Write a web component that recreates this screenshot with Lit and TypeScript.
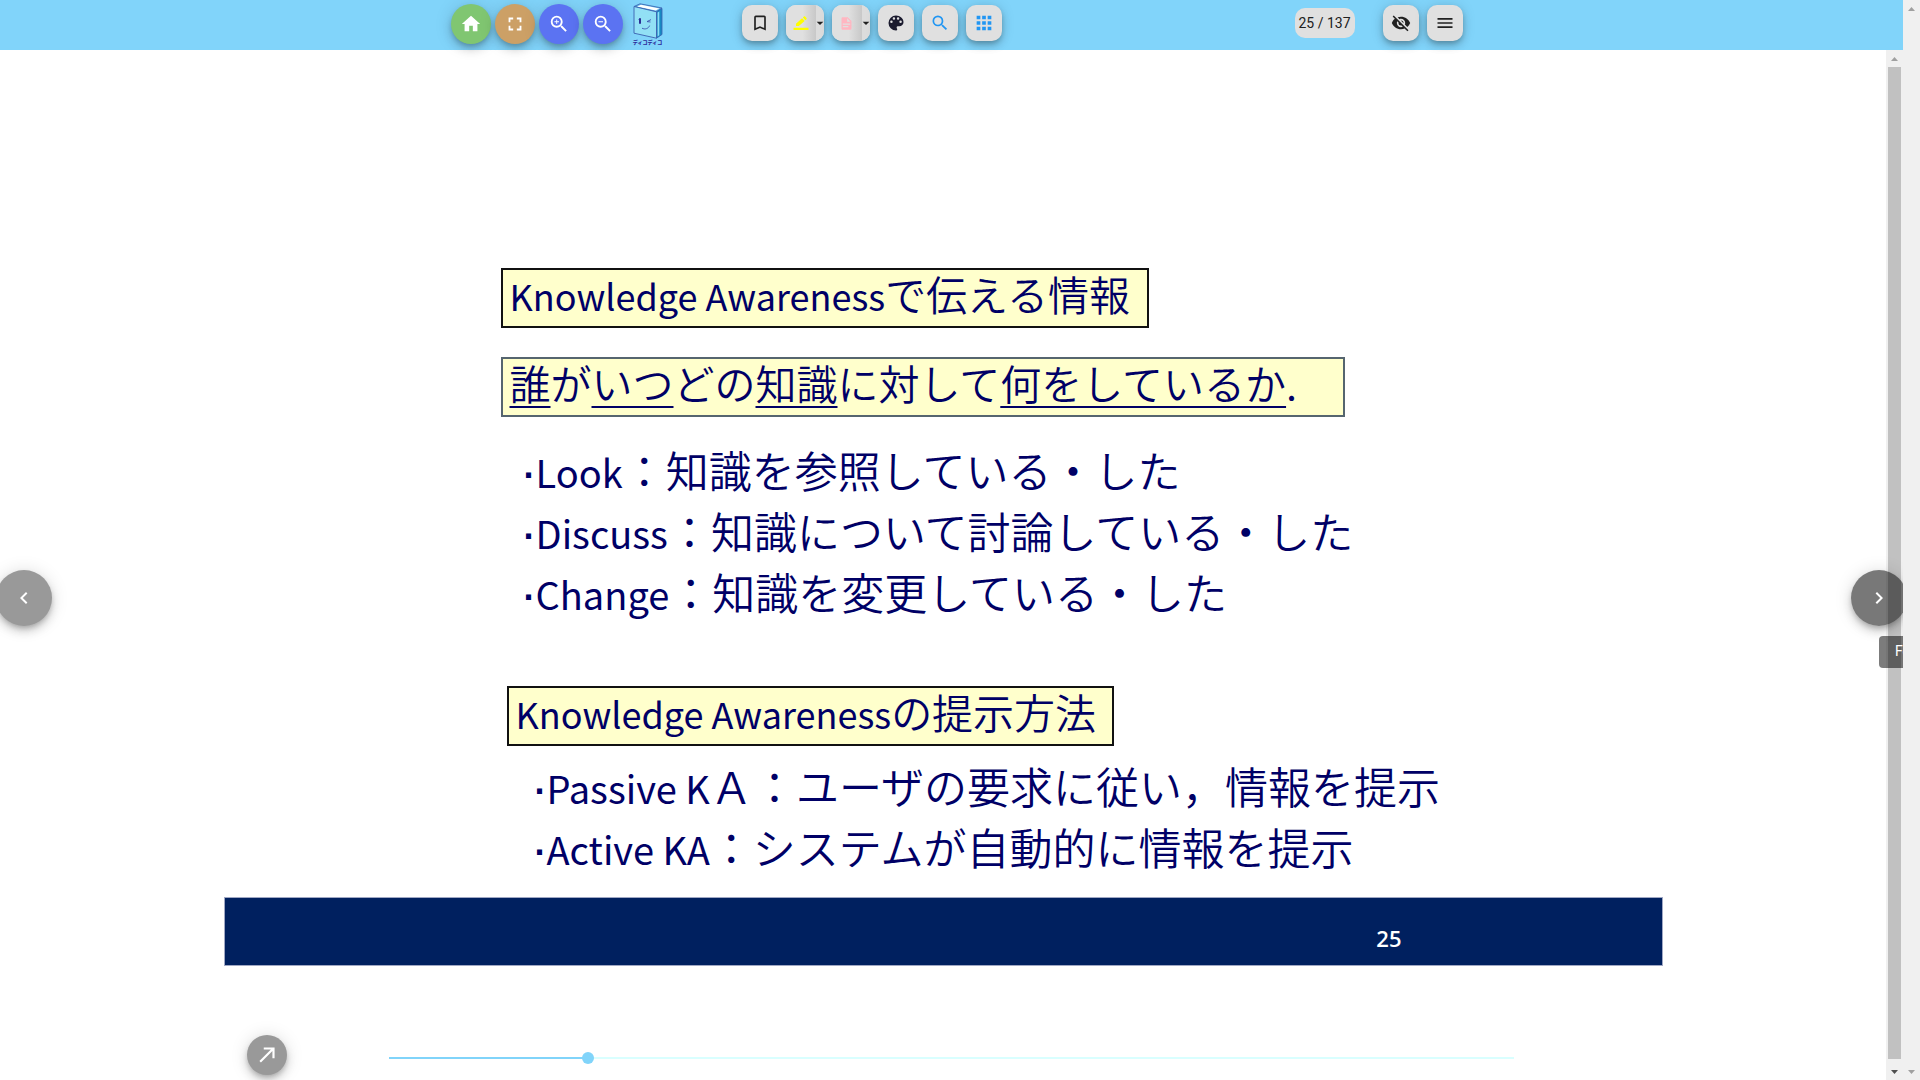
import { LitElement, html, css, svg } from "lit";
import { customElement, property, state } from "lit/decorators.js";

const ICONS: Record<string, string> = {
  home: "M10,20V14H14V20H19V12H22L12,3L2,12H5V20H10Z",
  fullscreen: "M5,5H10V7H7V10H5V5M14,5H19V10H17V7H14V5M17,14H19V19H14V17H17V14M10,17V19H5V14H7V17H10Z",
  zoomIn:
    "M15.5,14L20.5,19L19,20.5L14,15.5V14.71L13.73,14.43C12.59,15.41 11.11,16 9.5,16A6.5,6.5 0 0,1 3,9.5A6.5,6.5 0 0,1 9.5,3A6.5,6.5 0 0,1 16,9.5C16,11.11 15.41,12.59 14.43,13.73L14.71,14H15.5M9.5,14C12,14 14,12 14,9.5C14,7 12,5 9.5,5C7,5 5,7 5,9.5C5,12 7,14 9.5,14M12,10H10V12H9V10H7V9H9V7H10V9H12V10Z",
  zoomOut:
    "M15.5,14L20.5,19L19,20.5L14,15.5V14.71L13.73,14.43C12.59,15.41 11.11,16 9.5,16A6.5,6.5 0 0,1 3,9.5A6.5,6.5 0 0,1 9.5,3A6.5,6.5 0 0,1 16,9.5C16,11.11 15.41,12.59 14.43,13.73L14.71,14H15.5M9.5,14C12,14 14,12 14,9.5C14,7 12,5 9.5,5C7,5 5,7 5,9.5C5,12 7,14 9.5,14M7,9H12V10H7V9Z",
  bookmark: "M17,18L12,15.82L7,18V5H17M17,3H7A2,2 0 0,0 5,5V21L12,18L19,21V5C19,3.89 18.1,3 17,3Z",
  marker:
    "M18.6,7.4C19,7 19,6.4 18.6,6L16.9,4.1C16.5,3.7 15.9,3.7 15.5,4.1L14.2,5.4L17.3,8.7M16.4,9.6L13.3,6.3L6,12.8V15.6H9.4L16.4,9.6M3,17.8H21V20.4H3V17.8Z",
  note: "M13,9H18.5L13,3.5V9M6,2H14L20,8V20A2,2 0 0,1 18,22H6C4.89,22 4,21.1 4,20V4C4,2.89 4.89,2 6,2M15,18V16H6V18H15M18,14V12H6V14H18Z",
  palette:
    "M17.5,12A1.5,1.5 0 0,1 16,10.5A1.5,1.5 0 0,1 17.5,9A1.5,1.5 0 0,1 19,10.5A1.5,1.5 0 0,1 17.5,12M14.5,8A1.5,1.5 0 0,1 13,6.5A1.5,1.5 0 0,1 14.5,5A1.5,1.5 0 0,1 16,6.5A1.5,1.5 0 0,1 14.5,8M9.5,8A1.5,1.5 0 0,1 8,6.5A1.5,1.5 0 0,1 9.5,5A1.5,1.5 0 0,1 11,6.5A1.5,1.5 0 0,1 9.5,8M6.5,12A1.5,1.5 0 0,1 5,10.5A1.5,1.5 0 0,1 6.5,9A1.5,1.5 0 0,1 8,10.5A1.5,1.5 0 0,1 6.5,12M12,3A9,9 0 0,0 3,12A9,9 0 0,0 12,21A1.5,1.5 0 0,0 13.5,19.5C13.5,19.11 13.35,18.76 13.11,18.5C12.88,18.23 12.73,17.88 12.73,17.5A1.5,1.5 0 0,1 14.23,16H16A5,5 0 0,0 21,11C21,6.58 16.97,3 12,3Z",
  search:
    "M9.5,3A6.5,6.5 0 0,1 16,9.5C16,11.11 15.41,12.59 14.44,13.73L14.71,14H15.5L20.5,19L19,20.5L14,15.5V14.71L13.73,14.44C12.59,15.41 11.11,16 9.5,16A6.5,6.5 0 0,1 3,9.5A6.5,6.5 0 0,1 9.5,3M9.5,5C7,5 5,7 5,9.5C5,12 7,14 9.5,14C12,14 14,12 14,9.5C14,7 12,5 9.5,5Z",
  grid: "M16,20H20V16H16M16,14H20V10H16M10,8H14V4H10M16,8H20V4H16M10,14H14V10H10M4,14H8V10H4M4,20H8V16H4M10,20H14V16H10M4,8H8V4H4V8Z",
  eyeOff:
    "M11.83,9L15,12.16C15,12.11 15,12.05 15,12A3,3 0 0,0 12,9C11.94,9 11.89,9 11.83,9M7.53,9.8L9.08,11.35C9.03,11.56 9,11.77 9,12A3,3 0 0,0 12,15C12.22,15 12.44,14.97 12.65,14.92L14.2,16.47C13.53,16.8 12.79,17 12,17A5,5 0 0,1 7,12C7,11.21 7.2,10.47 7.53,9.8M2,4.27L4.28,6.55L4.73,7C3.08,8.3 1.78,10 1,12C2.73,16.39 7,19.5 12,19.5C13.55,19.5 15.03,19.2 16.38,18.66L16.81,19.08L19.73,22L21,20.73L3.27,3M12,7A5,5 0 0,1 17,12C17,12.64 16.87,13.26 16.64,13.82L19.57,16.75C21.07,15.5 22.27,13.86 23,12C21.27,7.61 17,4.5 12,4.5C10.6,4.5 9.26,4.75 8,5.2L10.17,7.35C10.74,7.13 11.35,7 12,7Z",
  menu: "M3,6H21V8H3V6M3,11H21V13H3V11M3,16H21V18H3V16Z",
  caret: "M7,10L12,15L17,10H7Z",
  arrow: "M5,17.59L15.59,7H9V5H19V15H17V8.41L6.41,19L5,17.59Z",
  left: "M15.41,16.58L10.83,12L15.41,7.41L14,6L8,12L14,18L15.41,16.58Z",
  right: "M8.59,16.58L13.17,12L8.59,7.41L10,6L16,12L10,18L8.59,16.58Z",
};

@customElement("mdi-icon")
class MdiIcon extends LitElement {
  @property() name = "";
  @property({ type: Number }) size = 20;

  static styles = css`
    :host { display: inline-flex; }
    svg { display: block; fill: currentColor; }
  `;

  render() {
    return html`<svg width=${this.size} height=${this.size} viewBox="0 0 24 24" aria-hidden="true">
      <path d=${ICONS[this.name]}></path>
    </svg>`;
  }
}

@customElement("scroll-track")
class ScrollTrack extends LitElement {
  @property({ type: Boolean }) thumb = false;

  static styles = css`
    :host { display: flex; flex-direction: column; width: 17px; background: #f0f0f0; flex: none; }
    .arrow { height: 17px; display: flex; align-items: center; justify-content: center; color: #a0a0a0; }
    .arrow.active { color: #505050; }
    .arrow svg { display: block; fill: currentColor; }
    .lane { flex: 1; display: flex; padding: 0 2px; }
    .thumb { flex: 1; background: #c1c1c1; margin-bottom: 4px; }
  `;

  render() {
    return html`
      <div class="arrow"><svg width="7" height="4" viewBox="0 0 7 4">${svg`<path d="M0 4L3.5 0L7 4Z"></path>`}</svg></div>
      <div class="lane">${this.thumb ? html`<div class="thumb"></div>` : ""}</div>
      <div class="arrow ${this.thumb ? "active" : ""}"><svg width="7" height="4" viewBox="0 0 7 4">${svg`<path d="M0 0L3.5 4L7 0Z"></path>`}</svg></div>
    `;
  }
}

@customElement("book-logo")
class BookLogo extends LitElement {
  static styles = css`
    :host { display: flex; flex-direction: column; align-items: center; width: 32px; }
    svg { display: block; }
    .name { font: 900 5px/6px "Noto Sans CJK JP", sans-serif; color: #2c2a98; white-space: nowrap; }
  `;

  render() {
    return html`
      <svg width="32" height="36" viewBox="0 0 32 36" aria-hidden="true">
        <path d="M2 3.5L8 .8L30 5L24.5 8.8Z" fill="#5fb6e6" stroke="#3a60b0" stroke-width=".8"></path>
        <path d="M5 3.4L9 1.8L27.5 5.4L23.5 7.6Z" fill="#fff"></path>
        <path d="M24.5 8.8L30 5.4V31.5L24.5 35.2Z" fill="#1789c2" stroke="#3a60b0" stroke-width=".8"></path>
        <path d="M25.6 9.6L27.3 8.5V32.3L25.6 33.6Z" fill="#8fdcf4"></path>
        <path d="M2 3.5L24.5 8.8V35.2L2 30.2Z" fill="#92e0f5" stroke="#3a60b0" stroke-width=".9"></path>
        <path d="M8 15.2V20.8" stroke="#2b2f95" stroke-width="2" fill="none"></path>
        <path d="M6.6 16.6L8 15M15 18.6L19 16.6M15 18.6L18.5 19M10 25.2C13 26.8 16.5 25.6 17.6 22.6" stroke="#3d53ae" stroke-width=".9" fill="none"></path>
      </svg>
      <span class="name">ディコディコ</span>
    `;
  }
}

@customElement("app-root")
class AppRoot extends LitElement {
  @state() page = 25;
  private total = 137;

  static styles = css`
    :host { display: block; font-family: Roboto, "Noto Sans CJK JP", sans-serif; color: #212121; }
    * { box-sizing: border-box; }
    button { border: 0; padding: 0; margin: 0; font: inherit; color: inherit; cursor: pointer; display: inline-flex; align-items: center; justify-content: center; }
    .window { display: flex; height: 100vh; overflow: hidden; background: #fff; }
    .page { position: relative; flex: 1; min-width: 0; display: flex; flex-direction: column; overflow: hidden; }

    .bar { height: 50px; flex: none; display: flex; justify-content: center; padding: 0 0 4px 10px; background: #81d4fa; }
    .tools { width: 1012px; display: flex; align-items: center; }
    .group { display: flex; align-items: center; gap: 8px; }
    .group.round { gap: 4px; width: 291px; padding-top: 2px; }
    .group.end { margin-left: auto; }
    .round-btn { width: 40px; height: 40px; border-radius: 50%; color: #fff; box-shadow: 0 3px 5px -1px #0003, 0 6px 10px #0002, 0 1px 18px #0002; }
    .green { background: #80c671; }
    .tan { background: #cca066; }
    .blue { background: #5b73f2; }
    book-logo { margin-left: 5px; }
    .tool { width: 36px; height: 36px; border-radius: 10px; background: #e0e0e0; box-shadow: 0 3px 5px -1px #0003, 0 5px 8px #0002, 0 1px 14px #0002; }
    .split { display: flex; width: 38px; height: 36px; border-radius: 10px; overflow: hidden; background: #e0e0e0; }
    .split-wrap { border-radius: 10px; box-shadow: 0 3px 5px -1px #0003, 0 5px 8px #0002, 0 1px 14px #0002; }
    .split .main { width: 30px; background: linear-gradient(90deg, #e0e0e0 55%, #c8c8c8); }
    .split .more { width: 8px; background: #dcdcdc; }
    .yellow { color: #ffff00; }
    .pink { color: #ffb6c1; }
    .ink { color: #1a1a2e; }
    .azure { color: #2196f3; }
    .count { height: 30px; width: 60px; display: flex; align-items: center; justify-content: center; border-radius: 10px; background: #e0e0e0; font-size: 14px; margin-right: 20px; }

    .body { flex: 1; min-height: 0; display: flex; }
    .stage { flex: 1; min-width: 0; display: flex; flex-direction: column; }
    .slide { width: 76%; min-width: 1439px; align-self: center; display: flex; flex-direction: column; padding-top: 218px; color: #000066; font: 350 41px/60px "Noto Sans CJK JP", sans-serif; white-space: nowrap; }
    .west { font-size: 36px; line-height: 40px; font-weight: 400; }
    .text { display: flex; flex-direction: column; align-items: flex-start; padding-left: 277px; }
    .box { margin: 0; font: inherit; line-height: 46px; height: 60px; border: 2px solid #111; background: #ffffcc; padding: 0 12px 0 7px; }
    .first { width: 648px; }
    .who { width: 844px; margin-top: 29px; border-color: #56656f; }
    .how { width: 607px; margin: 64px 0 0 6px; }
    .who u { text-decoration-thickness: 2px; text-underline-offset: 6px; text-decoration-skip-ink: none; }
    .list { list-style: none; margin: 22px 0 0; padding: 0 0 0 23px; font-size: 43px; line-height: 61px; }
    .list li { height: 61px; }
    .list .west { font-size: 38px; }
    .dot { font: 700 36px/40px "Liberation Sans", sans-serif; }
    .list.modes { margin-top: 9px; padding-left: 34px; }
    .foot { height: 69px; margin-top: 20px; background: #00205f; border: 1px solid #a0a8c4; display: flex; justify-content: flex-end; align-items: center; padding: 12px 260px 0 0; color: #fff; font: 600 22px/28px "Open Sans", sans-serif; }

    .seek { display: flex; align-items: flex-end; gap: 96px; padding: 0 366px 5px 247px; margin-top: auto; }
    .gray { background: #999; }
    .range { flex: 1; min-width: 0; height: 34px; margin: 0; appearance: none; background: none; }
    .range::-webkit-slider-runnable-track {
      height: 12px;
      background: linear-gradient(90deg, #81d4fa var(--done), #d9ffff var(--done)) center / calc(100% - 12px) 2px no-repeat;
    }
    .range::-webkit-slider-thumb { appearance: none; width: 12px; height: 12px; border-radius: 50%; background: #81d4fa; }

    .turn { position: absolute; top: 570px; width: 56px; height: 56px; border-radius: 50%; color: #fff; box-shadow: 0 3px 5px -1px #0003, 0 6px 10px #0002, 0 1px 18px #0002; }
    .prev { left: -4px; background: #999; }
    .next { right: -4px; background: #00000087; }
    .tip { position: absolute; top: 636px; left: calc(100% - 24px); height: 32px; padding: 0 16px; border-radius: 4px; background: #00000083; color: #fff; font-size: 14px; line-height: 30px; }
  `;

  private go(n: number) {
    this.page = Math.min(this.total, Math.max(1, n));
  }

  private point(term: string, rest: string) {
    return html`<li><span class="dot">·</span><span class="west">${term}</span>${rest}</li>`;
  }

  render() {
    const done = ((this.page - 1) / (this.total - 1)) * 100;
    return html`
      <div class="window">
        <div class="page">
          <header class="bar">
            <div class="tools">
              <div class="group round">
                <button class="round-btn green" aria-label="Home"><mdi-icon name="home" size="22"></mdi-icon></button>
                <button class="round-btn tan" aria-label="Full screen"><mdi-icon name="fullscreen" size="22"></mdi-icon></button>
                <button class="round-btn blue" aria-label="Zoom in"><mdi-icon name="zoomIn" size="22"></mdi-icon></button>
                <button class="round-btn blue" aria-label="Zoom out"><mdi-icon name="zoomOut" size="22"></mdi-icon></button>
                <book-logo></book-logo>
              </div>
              <div class="group">
                <button class="tool" aria-label="Bookmark"><mdi-icon name="bookmark"></mdi-icon></button>
                <div class="split-wrap"><div class="split">
                  <button class="main yellow" aria-label="Marker"><mdi-icon name="marker"></mdi-icon></button>
                  <button class="more" aria-label="Marker options"><mdi-icon name="caret" size="16"></mdi-icon></button>
                </div></div>
                <div class="split-wrap"><div class="split">
                  <button class="main pink" aria-label="Memo"><mdi-icon name="note" size="15"></mdi-icon></button>
                  <button class="more" aria-label="Memo options"><mdi-icon name="caret" size="16"></mdi-icon></button>
                </div></div>
                <button class="tool ink" aria-label="Palette"><mdi-icon name="palette"></mdi-icon></button>
                <button class="tool azure" aria-label="Search"><mdi-icon name="search"></mdi-icon></button>
                <button class="tool azure" aria-label="Page list"><mdi-icon name="grid" size="22"></mdi-icon></button>
              </div>
              <div class="group end">
                <span class="count">${this.page} / ${this.total}</span>
                <button class="tool" aria-label="Hide"><mdi-icon name="eyeOff"></mdi-icon></button>
                <button class="tool" aria-label="Menu"><mdi-icon name="menu"></mdi-icon></button>
              </div>
            </div>
          </header>
          <div class="body">
            <main class="stage">
              <article class="slide">
                <div class="text">
                  <h2 class="box first"><span class="west">Knowledge Awareness</span>で伝える情報</h2>
                  <p class="box who"><u>誰</u>が<u>いつ</u>どの<u>知識</u>に対して<u>何をしているか</u>.</p>
                  <ul class="list">
                    ${this.point("Look", "：知識を参照している・した")}
                    ${this.point("Discuss", "：知識について討論している・した")}
                    ${this.point("Change", "：知識を変更している・した")}
                  </ul>
                  <h2 class="box how"><span class="west">Knowledge Awareness</span>の提示方法</h2>
                  <ul class="list modes">
                    ${this.point("Passive K", "Ａ：ユーザの要求に従い，情報を提示")}
                    ${this.point("Active KA", "：システムが自動的に情報を提示")}
                  </ul>
                </div>
                <div class="foot">25</div>
              </article>
              <div class="seek">
                <button class="round-btn gray" aria-label="Jump"><mdi-icon name="arrow" size="26"></mdi-icon></button>
                <input class="range" type="range" aria-label="Page" min="1" max=${this.total} .value=${String(this.page)}
                  style="--done:${done}%" @input=${(e: Event) => this.go(Number((e.target as HTMLInputElement).value))} />
              </div>
            </main>
            <scroll-track thumb></scroll-track>
          </div>
          <button class="turn prev" aria-label="Back" @click=${() => this.go(this.page - 1)}><mdi-icon name="left" size="24"></mdi-icon></button>
          <button class="turn next" aria-label="Forward" @click=${() => this.go(this.page + 1)}><mdi-icon name="right" size="24"></mdi-icon></button>
          <div class="tip" role="tooltip">Forward</div>
        </div>
        <scroll-track></scroll-track>
      </div>
    `;
  }
}
